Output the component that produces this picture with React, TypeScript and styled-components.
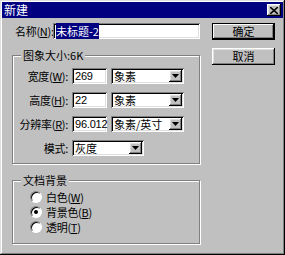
import React from "react";
import styled, { createGlobalStyle, css } from "styled-components";

const Global = createGlobalStyle`
  html, body { margin: 0; padding: 0; background: #c0c0c0; }
  * { box-sizing: border-box; }
  body { font-family: "Noto Sans CJK SC", "DejaVu Sans", sans-serif; font-size: 11px; }
`;

const raised = css`
  box-shadow: inset -1px -1px 0 #000, inset 1px 1px 0 #fff, inset -2px -2px 0 #808080, inset 2px 2px 0 #dfdfdf;
`;
const sunken = css`
  box-shadow: inset 1px 1px 0 #808080, inset -1px -1px 0 #fff, inset 2px 2px 0 #000, inset -2px -2px 0 #dfdfdf;
`;

const Window = styled.div`
  width: 285px;
  height: 255px;
  background: #c0c0c0;
  padding: 2px;
  display: flex;
  flex-direction: column;
  box-shadow: inset -1px -1px 0 #000, inset 1px 1px 0 #dfdfdf, inset -2px -2px 0 #808080, inset 2px 2px 0 #fff;
`;

const TitleBar = styled.div`
  height: 16px;
  background: #000080;
  display: flex;
  align-items: center;
  justify-content: space-between;
  padding: 0 2px 0 2px;
`;

const Title = styled.span`
  color: #fff;
  font-size: 12px;
  line-height: 14px;
`;

const CloseBtn = styled.div`
  width: 14px;
  height: 12px;
  background: #c0c0c0;
  ${raised};
  display: flex;
  align-items: center;
  justify-content: center;
`;

const Body = styled.div`
  flex: 1;
  display: flex;
  padding: 5px 8px 0 10px;
  gap: 12px;
`;

const Main = styled.div`
  width: 188px;
  display: flex;
  flex-direction: column;
`;

const Side = styled.div`
  flex: 1;
  display: flex;
  flex-direction: column;
  gap: 8px;
`;

const NameRow = styled.div`
  display: flex;
  align-items: center;
  height: 16px;
  padding-left: 3px;
`;

const Label = styled.span<{ $w?: number }>`
  font-size: 11px;
  line-height: 13px;
  color: #000;
  white-space: nowrap;
  letter-spacing: -0.3px;
  ${(p) => p.$w !== undefined && css`width: ${p.$w}px;`}
`;

const RightLabel = styled(Label)`
  text-align: right;
`;

const Field = styled.div<{ $w: number }>`
  width: ${(p) => p.$w}px;
  height: 16px;
  background: #fff;
  ${sunken};
  padding: 1px 2px 0 3px;
  font-size: 11px;
  line-height: 14px;
  color: #000;
  white-space: nowrap;
`;

const NumField = styled(Field)`
  font-family: "Liberation Sans", sans-serif;
  letter-spacing: -0.2px;
`;

const Selected = styled.span`
  background: #000080;
  color: #fff;
`;

const Group = styled.fieldset<{ $mt: number; $h: number }>`
  margin: ${(p) => p.$mt}px 0 0 0;
  height: ${(p) => p.$h}px;
  padding: 0;
  border: 1px solid #808080;
  box-shadow: 1px 1px 0 #fff, inset 1px 1px 0 #fff;
  min-width: 0;
`;

const Legend = styled.legend`
  margin-left: 8px;
  padding: 0 2px;
  font-size: 11px;
  line-height: 14px;
  background: #c0c0c0;
`;

const Rows = styled.div`
  display: flex;
  flex-direction: column;
  gap: 8px;
  padding-top: 6px;
`;

const Row = styled.div`
  display: grid;
  grid-template-columns: 55px 35px 73px;
  column-gap: 4px;
  align-items: center;
`;

const ModeRow = styled.div`
  display: grid;
  grid-template-columns: 55px 72px;
  column-gap: 4px;
  align-items: center;
`;

const SelectBox = styled.div<{ $w: number }>`
  width: ${(p) => p.$w}px;
  height: 16px;
  background: #fff;
  ${sunken};
  display: flex;
  align-items: stretch;
  padding: 2px;
`;

const SelectText = styled.span`
  flex: 1;
  font-size: 11px;
  line-height: 12px;
  padding-left: 1px;
  white-space: nowrap;
`;

const DropBtn = styled.div`
  width: 13px;
  background: #c0c0c0;
  ${raised};
  display: flex;
  align-items: center;
  justify-content: center;
`;

const Radios = styled.div`
  display: flex;
  flex-direction: column;
  gap: 3px;
  padding: 4px 0 0 17px;
`;

const RadioRow = styled.div`
  display: flex;
  align-items: center;
  gap: 4px;
  height: 12px;
`;

const RadioCircle = styled.div<{ $checked?: boolean }>`
  width: 12px;
  height: 12px;
  border-radius: 50%;
  background: #fff;
  border: 1px solid;
  border-color: #808080 #fff #fff #808080;
  box-shadow: inset 1px 1px 0 #000;
  display: flex;
  align-items: center;
  justify-content: center;
  &::after {
    content: "";
    display: ${(p) => (p.$checked ? "block" : "none")};
    width: 4px;
    height: 4px;
    border-radius: 50%;
    background: #000;
  }
`;

const Button = styled.div<{ $default?: boolean }>`
  width: 63px;
  height: 17px;
  background: #c0c0c0;
  display: flex;
  align-items: center;
  justify-content: center;
  font-size: 11px;
  line-height: 13px;
  ${(p) =>
    p.$default
      ? css`
          border: 1px solid #000;
          box-shadow: inset -1px -1px 0 #000, inset 1px 1px 0 #fff, inset -2px -2px 0 #808080;
        `
      : raised}
`;

const Arrow = () => (
  <svg width="7" height="4" viewBox="0 0 7 4">
    <path d="M0 0h7L3.5 4z" fill="#000" />
  </svg>
);

const Select = ({ w, value }: { w: number; value: string }) => (
  <SelectBox $w={w}>
    <SelectText>{value}</SelectText>
    <DropBtn>
      <Arrow />
    </DropBtn>
  </SelectBox>
);

export default function App() {
  return (
    <>
      <Global />
      <Window>
        <TitleBar>
          <Title>新建</Title>
          <CloseBtn>
            <svg width="8" height="7" viewBox="0 0 8 7">
              <path d="M0 0L8 7M8 0L0 7" stroke="#000" strokeWidth="1.6" />
            </svg>
          </CloseBtn>
        </TitleBar>
        <Body>
          <Main>
            <NameRow>
              <Label $w={38}>
                名称(<u>N</u>):
              </Label>
              <Field $w={147}>
                <Selected>未标题-2</Selected>
              </Field>
            </NameRow>
            <Group $mt={9} $h={116}>
              <Legend>图象大小:6K</Legend>
              <Rows>
                <Row>
                  <RightLabel>
                    宽度(<u>W</u>):
                  </RightLabel>
                  <NumField $w={35}>269</NumField>
                  <Select w={73} value="象素" />
                </Row>
                <Row>
                  <RightLabel>
                    高度(<u>H</u>):
                  </RightLabel>
                  <NumField $w={35}>22</NumField>
                  <Select w={73} value="象素" />
                </Row>
                <Row>
                  <RightLabel>
                    分辨率(<u>R</u>):
                  </RightLabel>
                  <NumField $w={35}>96.012</NumField>
                  <Select w={73} value="象素/英寸" />
                </Row>
                <ModeRow>
                  <RightLabel>模式:</RightLabel>
                  <Select w={72} value="灰度" />
                </ModeRow>
              </Rows>
            </Group>
            <Group $mt={9} $h={71}>
              <Legend>文档背景</Legend>
              <Radios>
                <RadioRow>
                  <RadioCircle />
                  <Label>
                    白色(<u>W</u>)
                  </Label>
                </RadioRow>
                <RadioRow>
                  <RadioCircle $checked />
                  <Label>
                    背景色(<u>B</u>)
                  </Label>
                </RadioRow>
                <RadioRow>
                  <RadioCircle />
                  <Label>
                    透明(<u>T</u>)
                  </Label>
                </RadioRow>
              </Radios>
            </Group>
          </Main>
          <Side>
            <Button $default>确定</Button>
            <Button>取消</Button>
          </Side>
        </Body>
      </Window>
    </>
  );
}
